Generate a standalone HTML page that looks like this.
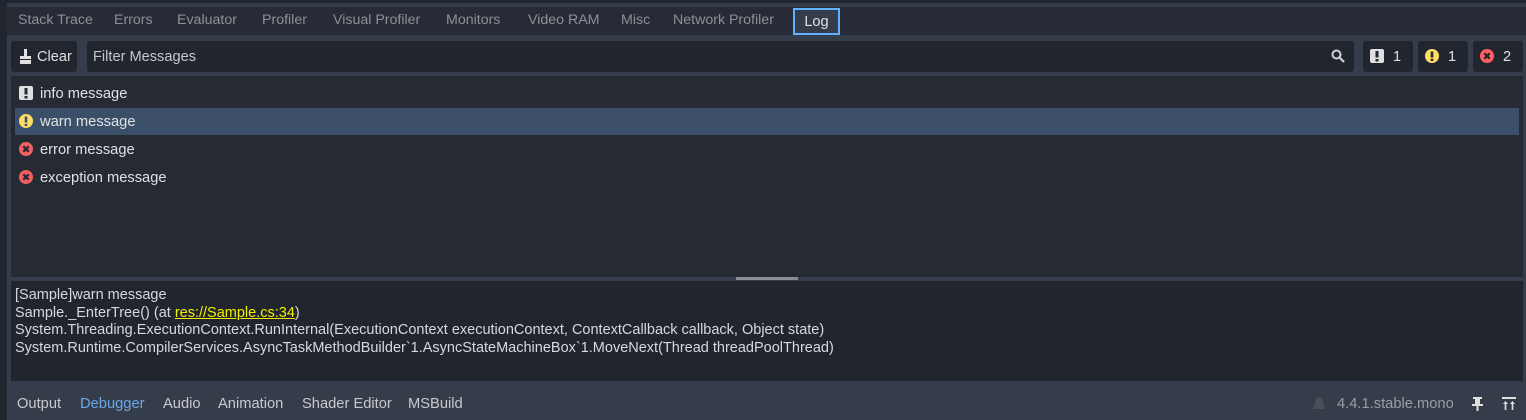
<!DOCTYPE html>
<html><head><meta charset="utf-8"><style>
*{box-sizing:border-box;margin:0;padding:0}
body{width:1526px;height:420px;overflow:hidden;background:#363d4a;font-family:"Liberation Sans","DejaVu Sans",sans-serif;font-size:14.6px;color:#e0e0e0;position:relative}
.a{position:absolute}
.tab{position:absolute;top:12px;color:#8c9098;font-size:14.2px}
.btn{position:absolute;top:41px;height:31px;background:#21262e;border-radius:3px}
.row{position:absolute;left:15px;width:1504px;height:27px;line-height:29px;padding-left:25px;font-size:14.7px;color:#dfe1e4}
.ic{position:absolute;left:4px;top:6px;width:14px;height:14px}
.det{position:absolute;left:15px;top:287px;font-size:14.5px;color:#d6d8dc;line-height:17.5px}
.bt{position:absolute;top:396px;color:#c8cace;font-size:14.7px}
</style></head><body>
<div class="a" style="left:0;top:0;width:7px;height:420px;background:#21252d"></div>
<div class="a" style="left:7px;top:0;width:1519px;height:3px;background:#21252d"></div>
<div class="a" style="left:7px;top:7px;width:1519px;height:28px;background:#262b35"></div>
<div class="tab" style="left:18px">Stack Trace</div>
<div class="tab" style="left:114px">Errors</div>
<div class="tab" style="left:177px">Evaluator</div>
<div class="tab" style="left:262px">Profiler</div>
<div class="tab" style="left:333px">Visual Profiler</div>
<div class="tab" style="left:446px">Monitors</div>
<div class="tab" style="left:528px">Video RAM</div>
<div class="tab" style="left:621px">Misc</div>
<div class="tab" style="left:673px">Network Profiler</div>
<div class="a" style="left:793px;top:8px;width:47px;height:27px;border:2px solid #5fb2ff;background:#363d4a;color:#e0e0e0;line-height:25px;text-align:center;font-size:14.6px">Log</div>

<div class="btn" style="left:11px;width:66px"><svg class="a" style="left:8px;top:8px" width="13" height="15" viewBox="0 0 13 15"><rect x="5" y="0" width="3" height="7" fill="#e0e0e0"/><rect x="1" y="7" width="11" height="3" fill="#e0e0e0"/><rect x="1" y="11" width="11" height="4" fill="#e0e0e0"/></svg><span class="a" style="left:26px;top:8px;color:#e0e0e0">Clear</span></div>
<div class="btn" style="left:87px;width:1267px"><span class="a" style="left:6px;top:8px;color:#c5c7cb">Filter Messages</span><svg class="a" style="left:1244px;top:8px" width="14" height="14" viewBox="0 0 14 14"><circle cx="5.5" cy="5.5" r="4" fill="none" stroke="#cfd1d4" stroke-width="2"/><line x1="8.5" y1="8.5" x2="13" y2="13" stroke="#cfd1d4" stroke-width="2.2"/></svg></div>
<div class="btn" style="left:1363px;width:50px"><svg class="a" style="left:7px;top:8px" width="14" height="14"><rect width="14" height="14" rx="2" fill="#e0e0e0"/><rect x="5.5" y="2" width="3" height="6.5" fill="#21262e"/><rect x="5.5" y="10" width="3" height="2.5" fill="#21262e"/></svg><span class="a" style="left:30px;top:8px">1</span></div>
<div class="btn" style="left:1418px;width:50px"><svg class="a" style="left:7px;top:8px" width="14" height="14"><circle cx="7" cy="7" r="7" fill="#ffdd65"/><rect x="5.7" y="2.5" width="2.6" height="6" fill="#21262e"/><rect x="5.7" y="9.8" width="2.6" height="2.2" fill="#21262e"/></svg><span class="a" style="left:30px;top:8px">1</span></div>
<div class="btn" style="left:1473px;width:50px"><svg class="a" style="left:7px;top:8px" width="14" height="14"><circle cx="7" cy="7" r="7" fill="#ff5f5f"/><path d="M4.3 4.3L9.7 9.7M9.7 4.3L4.3 9.7" stroke="#21262e" stroke-width="2.2"/></svg><span class="a" style="left:30px;top:8px">2</span></div>

<div class="a" style="left:11px;top:76px;width:1512px;height:201px;background:#252a33"></div>
<div class="row" style="top:80px"><svg class="ic" width="14" height="14"><rect width="14" height="14" rx="2" fill="#e0e0e0"/><rect x="5.5" y="2" width="3" height="6.5" fill="#252a33"/><rect x="5.5" y="10" width="3" height="2.5" fill="#252a33"/></svg>info message</div>
<div class="row" style="top:108px;background:#3b5068"><svg class="ic" width="14" height="14"><circle cx="7" cy="7" r="7" fill="#ffdd65"/><rect x="5.7" y="2.5" width="2.6" height="6" fill="#3b5068"/><rect x="5.7" y="9.8" width="2.6" height="2.2" fill="#3b5068"/></svg>warn message</div>
<div class="row" style="top:136px"><svg class="ic" width="14" height="14"><circle cx="7" cy="7" r="7" fill="#f06060"/><path d="M4.3 4.3L9.7 9.7M9.7 4.3L4.3 9.7" stroke="#252a33" stroke-width="2.2"/></svg>error message</div>
<div class="row" style="top:164px"><svg class="ic" width="14" height="14"><circle cx="7" cy="7" r="7" fill="#f06060"/><path d="M4.3 4.3L9.7 9.7M9.7 4.3L4.3 9.7" stroke="#252a33" stroke-width="2.2"/></svg>exception message</div>

<div class="a" style="left:736px;top:277px;width:62px;height:3px;background:#8a8e94"></div>
<div class="a" style="left:11px;top:281px;width:1512px;height:100px;background:#21252d"></div>
<div class="det">[Sample]warn message<br>Sample._EnterTree() (at <span style="color:#f0f000;text-decoration:underline">res://Sample.cs:34</span>)<br>System.Threading.ExecutionContext.RunInternal(ExecutionContext executionContext, ContextCallback callback, Object state)<br>System.Runtime.CompilerServices.AsyncTaskMethodBuilder`1.AsyncStateMachineBox`1.MoveNext(Thread threadPoolThread)</div>

<div class="bt" style="left:17px">Output</div>
<div class="bt" style="left:80px;color:#68a9eb">Debugger</div>
<div class="bt" style="left:163px">Audio</div>
<div class="bt" style="left:218px">Animation</div>
<div class="bt" style="left:302px">Shader Editor</div>
<div class="bt" style="left:408px">MSBuild</div>
<svg class="a" style="left:1313px;top:397px" width="12" height="14"><path d="M6 0C3 0 2 3 2 6L0 12H12L10 6C10 3 9 0 6 0Z" fill="#4a505a"/></svg>
<div class="bt" style="left:1337px;color:#9a9ea5">4.4.1.stable.mono</div>
<svg class="a" style="left:1472px;top:397px" width="11" height="14"><rect x="1" y="0" width="9" height="2" fill="#e0e0e0"/><rect x="3" y="2" width="5" height="5" fill="#e0e0e0"/><rect x="0" y="7" width="11" height="2" fill="#e0e0e0"/><rect x="4.5" y="9" width="2" height="5" fill="#e0e0e0"/></svg>
<svg class="a" style="left:1502px;top:397px" width="14" height="13"><rect x="0" y="0" width="14" height="2" fill="#e0e0e0"/><path d="M3.5 4L1 7H6ZM10.5 4L8 7H13Z" fill="#e0e0e0"/><rect x="2.7" y="6" width="1.6" height="7" fill="#e0e0e0"/><rect x="9.7" y="6" width="1.6" height="7" fill="#e0e0e0"/></svg>
</body></html>
